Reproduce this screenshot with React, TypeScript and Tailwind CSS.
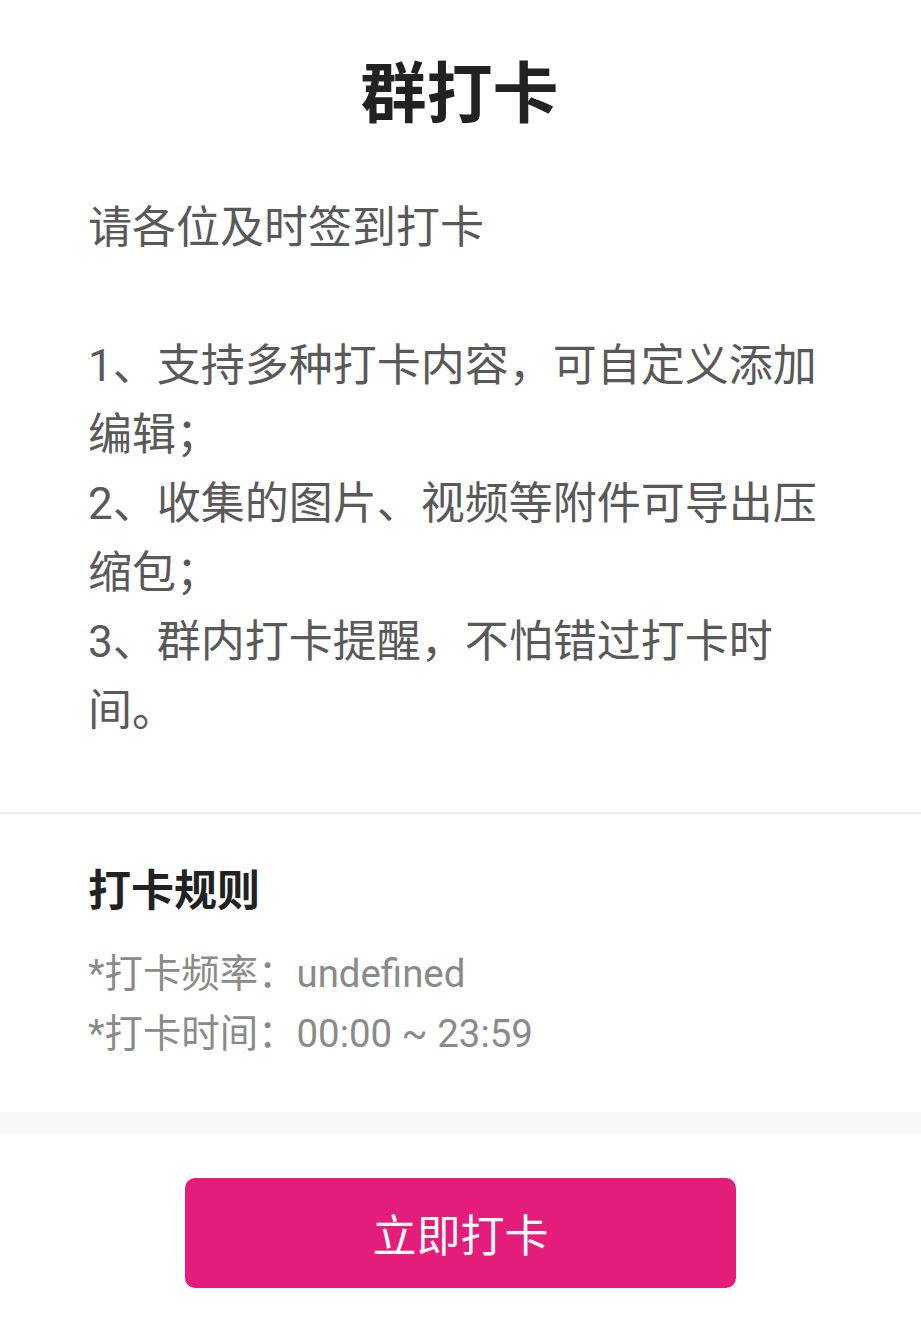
import React from 'react';

const rules = [
  { label: '*打卡频率：', value: 'undefined' },
  { label: '*打卡时间：', value: '00:00 ~ 23:59' },
];

const desc = `请各位及时签到打卡

1、支持多种打卡内容，可自定义添加编辑；
2、收集的图片、视频等附件可导出压缩包；
3、群内打卡提醒，不怕错过打卡时间。`;

export default function App() {
  return (
    <div
      className="min-h-[1333px] w-full bg-white"
      style={{ fontFamily: 'Roboto, "Noto Sans CJK SC", sans-serif' }}
    >
      {/* Header & description */}
      <div className="pl-[88px] pr-[90px] pt-[50px] pb-[66px] border-b-2 border-[#efefef]">
        <h1 className="text-center text-[66px] leading-[90px] font-bold text-[#222]">群打卡</h1>
        <p className="mt-[54px] whitespace-pre-wrap text-[44px] leading-[69px] text-[#595959]">{desc}</p>
      </div>

      {/* Rules */}
      <div className="pl-[88px] pr-[90px] pt-[47px] pb-[48px]">
        <h2 className="text-[43px] leading-[60px] font-bold text-[#222]">打卡规则</h2>
        <div className="mt-[23px]">
          {rules.map((r) => (
            <div key={r.label} className="text-[38.4px] leading-[60px] text-[#8a8a8a]">
              {r.label}
              {r.value}
            </div>
          ))}
        </div>
      </div>

      <div className="h-[22px] bg-[#f7f8fa]" />

      {/* Action */}
      <div className="flex justify-center pt-[44px] pb-[45px]">
        <button className="w-[551px] h-[110px] rounded-[10px] bg-[#e41d7b] text-white text-[44px] leading-[110px] pt-[4px]">
          立即打卡
        </button>
      </div>
    </div>
  );
}
